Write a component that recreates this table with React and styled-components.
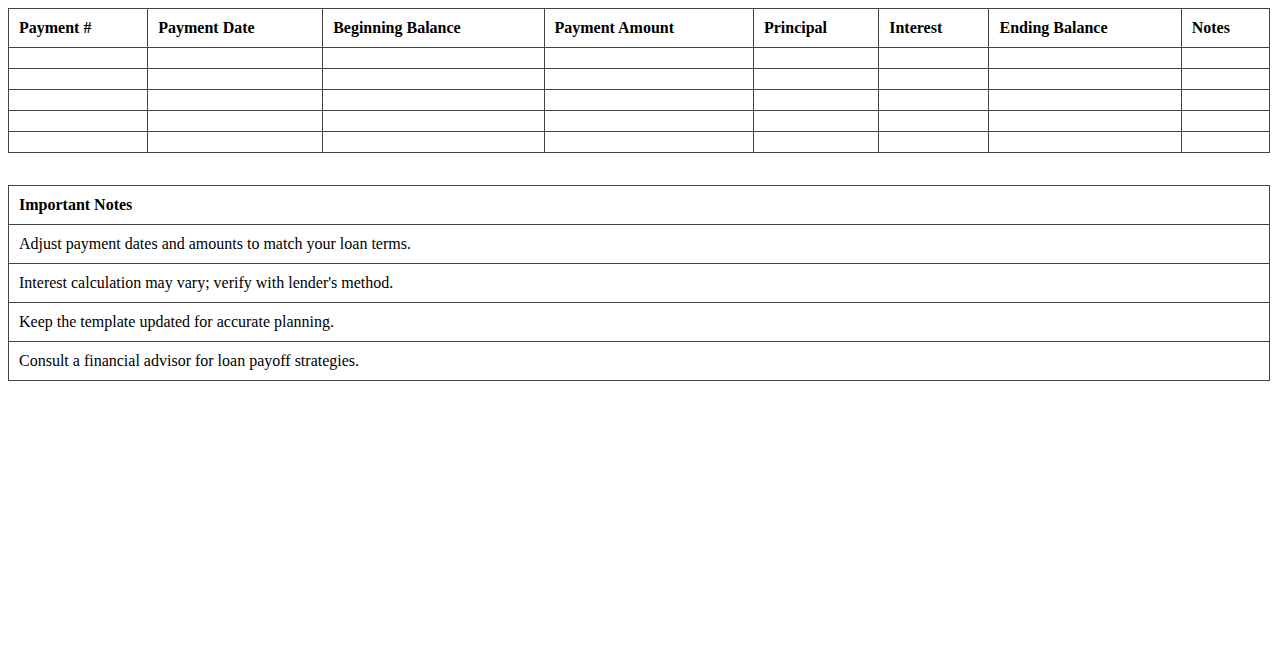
import React from "react";
import styled, { createGlobalStyle } from "styled-components";

const GlobalStyle = createGlobalStyle`
  body {
    margin: 8px;
    background: #ffffff;
    color: #000000;
    font-family: "Liberation Serif", "Times New Roman", serif;
    font-size: 16px;
  }
`;

const columns = [
    "Payment #",
    "Payment Date",
    "Beginning Balance",
    "Payment Amount",
    "Principal",
    "Interest",
    "Ending Balance",
    "Notes"
];

const notes = [
    "Adjust payment dates and amounts to match your loan terms.",
    "Interest calculation may vary; verify with lender's method.",
    "Keep the template updated for accurate planning.",
    "Consult a financial advisor for loan payoff strategies."
];

class App extends React.Component {

    render() {
        const rows = [0, 1, 2, 3, 4];
        return (
            <Wrapper>
                <GlobalStyle/>
                <Table>
                    <thead>
                        <tr>
                            {columns.map(c => <Th key={c}>{c}</Th>)}
                        </tr>
                    </thead>
                    <tbody>
                        {rows.map(r =>
                            <tr key={r}>
                                {columns.map(c => <Td key={c}></Td>)}
                            </tr>
                        )}
                    </tbody>
                </Table>

                <NotesTable>
                    <thead>
                        <tr>
                            <Th>Important Notes</Th>
                        </tr>
                    </thead>
                    <tbody>
                        {notes.map(n =>
                            <tr key={n}>
                                <Td>{n}</Td>
                            </tr>
                        )}
                    </tbody>
                </NotesTable>
            </Wrapper>
        )
    }
}

const Wrapper = styled.div`
  display: block;
`;

const Table = styled.table`
  width: 100%;
  border-collapse: collapse;
  font-size: 16px;
`;

const NotesTable = styled(Table)`
  margin-top: 32px;
`;

const Th = styled.th`
  border: 1px solid #444;
  padding: 10px;
  text-align: left;
  font-weight: bold;
`;

const Td = styled.td`
  border: 1px solid #444;
  padding: 10px;
  text-align: left;
`;

export default App;
